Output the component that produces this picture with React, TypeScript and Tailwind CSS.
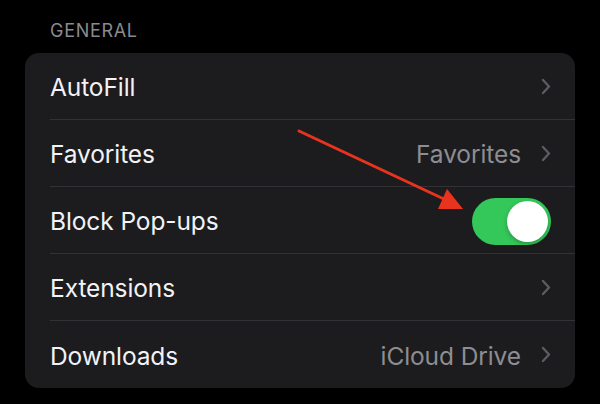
import React from "react";

const Chevron = () => (
  <svg width="10" height="17" viewBox="0 0 10 17" fill="none" className="shrink-0">
    <path d="M2 2l6 6.5L2 15" stroke="#5b5b60" strokeWidth="2.4" strokeLinecap="round" strokeLinejoin="round" />
  </svg>
);

function Row({ label, value, chevron = true, toggle = false, last = false }: { label: string; value?: string; chevron?: boolean; toggle?: boolean; last?: boolean }) {
  return (
    <div className="flex h-[67px] pl-[25px]">
      <div className={`flex flex-1 items-center pr-[24px] ${last ? "" : "border-b border-[#323236]"}`}>
        <span className="flex-1 pt-[3px] text-[24.5px] text-[#f2f2f7] tracking-[-0.1px]">{label}</span>
        {value && <span className="mr-[20px] pt-[3px] text-[24.5px] text-[#8d8d92] tracking-[-0.1px]">{value}</span>}
        {chevron && !toggle && <Chevron />}
        {toggle && (
          <div className="mt-[2px] flex h-[47px] w-[79px] items-center justify-end rounded-full bg-[#34c759] pr-[3px]">
            <div className="h-[41px] w-[41px] rounded-full bg-white shadow-[0_2px_4px_rgba(0,0,0,0.25)]" />
          </div>
        )}
      </div>
    </div>
  );
}

export default function App() {
  return (
    <div className="relative h-[404px] w-[600px] overflow-hidden bg-black" style={{ fontFamily: "Inter, 'Noto Sans', sans-serif" }}>
      <div className="pl-[50px] pt-[20px] text-[18px] leading-[22px] tracking-[0.7px] text-[#8a8a8f]">GENERAL</div>
      <div className="mx-[25px] mt-[11px] overflow-hidden rounded-[14px] bg-[#1c1c1e]">
        <Row label="AutoFill" />
        <Row label="Favorites" value="Favorites" />
        <Row label="Block Pop-ups" toggle />
        <Row label="Extensions" />
        <Row label="Downloads" value="iCloud Drive" last />
      </div>
      <svg className="pointer-events-none absolute left-0 top-0" width="600" height="404">
        <line x1="299" y1="131" x2="446" y2="200" stroke="#e8341f" strokeWidth="3" strokeLinecap="round" />
        <polygon points="463,209 438,209 447,189" fill="#e8341f" />
      </svg>
    </div>
  );
}
